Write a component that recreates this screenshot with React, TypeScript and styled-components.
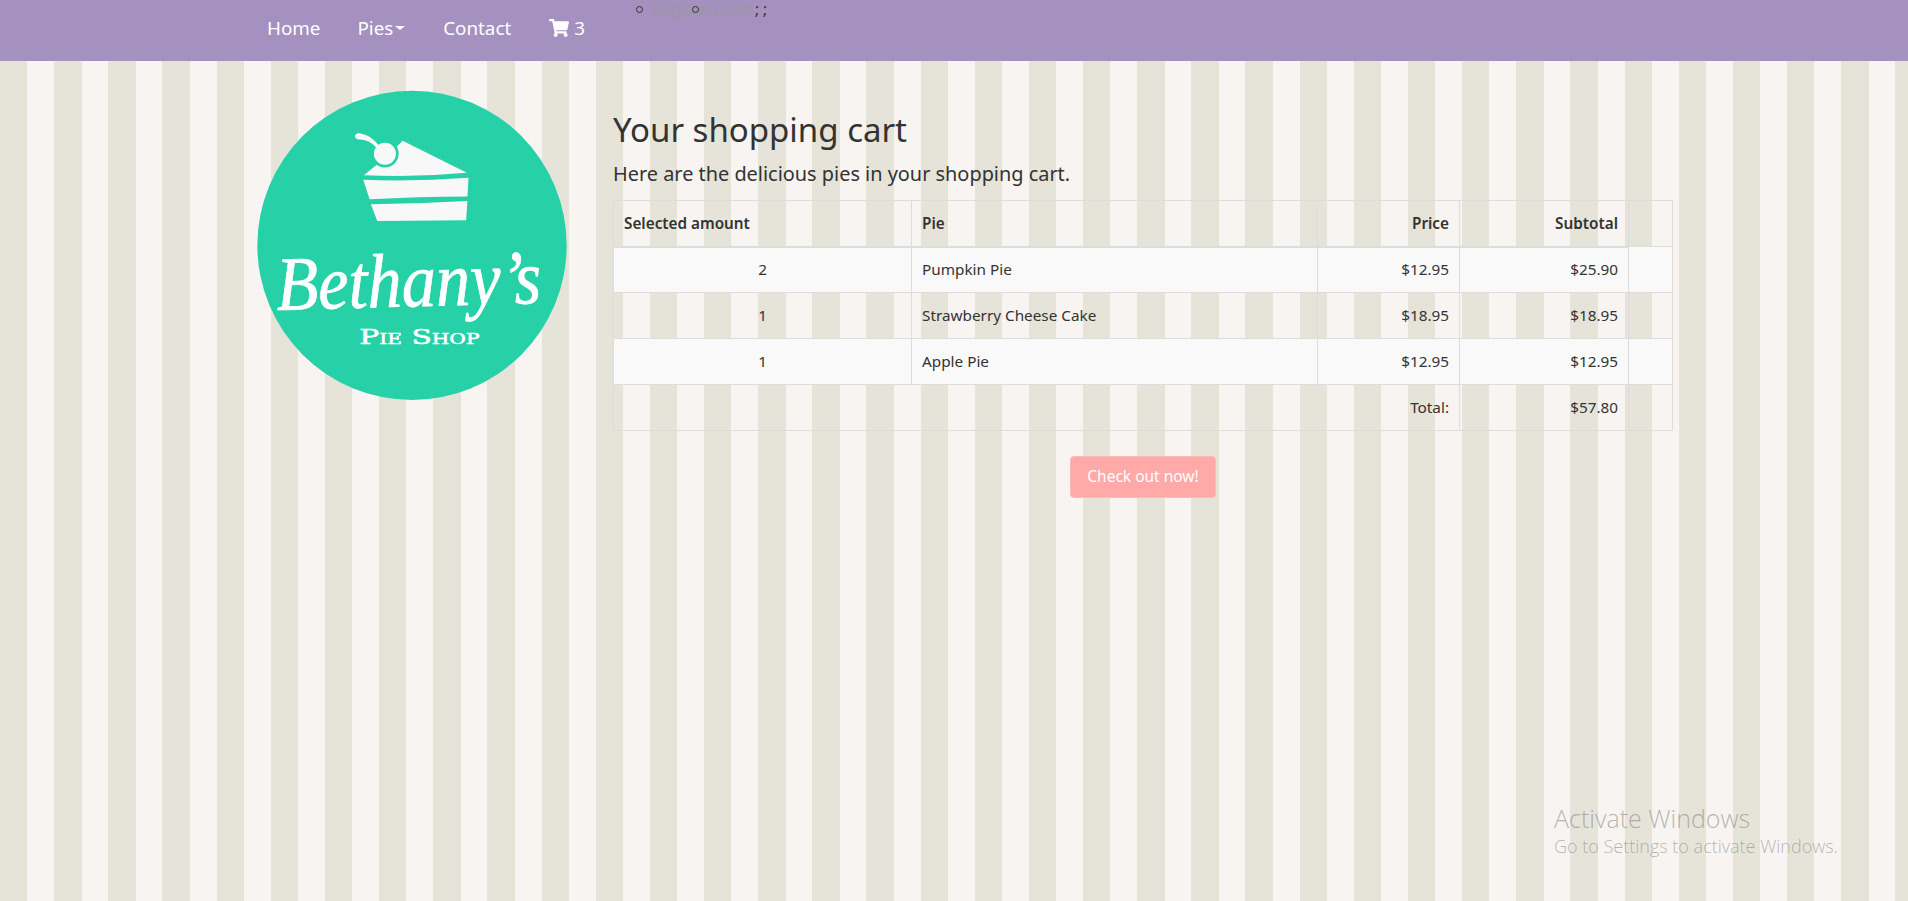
import React from "react";
import styled, { createGlobalStyle } from "styled-components";
import { FaShoppingCart } from "react-icons/fa";

const GlobalStyle = createGlobalStyle`
  html, body {
    margin: 0;
    padding: 0;
  }
  body {
    font-family: "Noto Sans", "Open Sans", sans-serif;
    color: #333;
    background-color: #f7f4f1;
    background-image: repeating-linear-gradient(
      90deg,
      #e6e4d9 0,
      #e6e4d9 27.4px,
      #f7f4f1 27.4px,
      #f7f4f1 54.15px
    );
  }
`;

const Page = styled.div`
  height: 901px;
  overflow: hidden;
`;

const Nav = styled.nav`
  height: 61px;
  background: #a591bf;
  display: flex;
  align-items: flex-start;
  padding-left: 267px;
  box-sizing: border-box;
`;

const NavLink = styled.a<{ $gap: number }>`
  display: flex;
  align-items: center;
  color: #fff;
  font-size: 18.8px;
  line-height: 28px;
  margin-top: 14px;
  margin-right: ${(p) => p.$gap}px;
  text-decoration: none;
  white-space: nowrap;
`;

const Caret = styled.span`
  display: inline-block;
  width: 0;
  height: 0;
  margin-left: 2px;
  border-top: 4px solid #fff;
  border-left: 5px solid transparent;
  border-right: 5px solid transparent;
`;

const CartIcon = styled(FaShoppingCart)`
  font-size: 20px;
  margin-right: 5px;
`;

const UserMenu = styled.ul`
  display: flex;
  list-style: none;
  margin: 0 0 0 51px;
  padding: 0;
  font-size: 15.4px;
  line-height: 19px;
  color: #9a97a3;
`;

const UserItem = styled.li<{ $marker: number; $pad?: number }>`
  position: relative;
  padding-left: ${(p) => p.$pad || 0}px;
  &::before {
    content: "";
    position: absolute;
    left: ${(p) => p.$marker}px;
    top: 6px;
    width: 5px;
    height: 5px;
    border: 1.5px solid #333;
    border-radius: 50%;
  }
`;

const Separators = styled.li`
  color: #333;
  margin-left: 2px;
`;

const Main = styled.main`
  display: flex;
  align-items: flex-start;
  padding: 30px 0 0 257px;
`;

const Logo = styled.svg`
  flex: none;
  width: 310px;
  height: 309px;
  overflow: visible;
`;

const Content = styled.section`
  margin-left: 46px;
  width: 1060px;
  padding-top: 19px;
`;

const Title = styled.h1`
  margin: 0;
  font-size: 33px;
  font-weight: 400;
  line-height: 40px;
`;

const Lead = styled.p`
  margin: 9px 0 0;
  font-size: 19.9px;
  line-height: 29px;
`;

const CartTable = styled.table`
  border-collapse: collapse;
  table-layout: fixed;
  width: 1059px;
  margin-top: 12px;
  border: 1px solid #ddd;
  font-size: 15.3px;
`;

const Head = styled.th<{ $right?: boolean }>`
  height: 46px;
  box-sizing: border-box;
  padding: 0 10px 1px;
  font-weight: 600;
  text-align: ${(p) => (p.$right ? "right" : "left")};
  border: 1px solid #ddd;
  border-bottom: 2px solid #ddd;
`;

const Row = styled.tr<{ $striped?: boolean }>`
  background: ${(p) => (p.$striped ? "#f9f9f9" : "transparent")};
`;

const Cell = styled.td<{ $align?: string }>`
  height: 46px;
  box-sizing: border-box;
  padding: 0 10px 2px;
  text-align: ${(p) => p.$align || "left"};
  border: 1px solid #ddd;
`;

const Checkout = styled.div`
  display: flex;
  justify-content: center;
  margin-top: 25px;
`;

const CheckoutButton = styled.a`
  box-sizing: border-box;
  width: 146px;
  height: 42px;
  padding-bottom: 2px;
  display: flex;
  align-items: center;
  justify-content: center;
  background: #ffa9a9;
  border: 1px solid #ffb8b8;
  border-radius: 4px;
  color: #fff;
  font-size: 15.5px;
`;

const Watermark = styled.div`
  position: absolute;
  left: 1554px;
  top: 802px;
  color: rgba(100, 100, 100, 0.45);
  font-family: "Open Sans", sans-serif;
  font-weight: 300;
`;

const WatermarkTitle = styled.div`
  font-size: 25px;
  line-height: 32px;
`;

const WatermarkText = styled.div`
  font-size: 18px;
  line-height: 24px;
`;

const rows = [
  { amount: 2, pie: "Pumpkin Pie", price: "$12.95", subtotal: "$25.90" },
  { amount: 1, pie: "Strawberry Cheese Cake", price: "$18.95", subtotal: "$18.95" },
  { amount: 1, pie: "Apple Pie", price: "$12.95", subtotal: "$12.95" },
];

const LogoArt = () => (
  <Logo viewBox="52 33 928 925">
    <circle cx="516" cy="495" r="463" fill="#26d1a8" />
    <g fill="#f8f8f8">
      <path d="M488 182 L680 278 Q530 292 372 285 L415 250 L470 200 Z" />
      <circle cx="435" cy="221" r="41" fill="#26d1a8" />
      <path d="M370 299 Q530 304 685 293 L682 349 Q530 350 389 357 Z" />
      <path d="M393 372 Q540 370 682 362 L678 420 L412 422 Z" />
      <circle cx="435" cy="221" r="33" />
      <path d="M345 168 Q348 158 362 160 Q395 165 417 197 L410 203 Q388 178 358 178 Q346 178 345 168 Z" />
    </g>
    <g fill="#fff" textAnchor="middle">
      <text
        fontFamily="'Liberation Serif', serif"
        fontStyle="italic"
        fontSize="205"
        stroke="#fff"
        strokeWidth="2"
        transform="translate(508 678) rotate(-1.5) scale(1 1.12)"
      >
        Bethany’s
      </text>
      <text
        x="538"
        y="790"
        fontFamily="'DejaVu Serif', serif"
        fontSize="62"
        stroke="#fff"
        strokeWidth="1.5"
        textLength="360"
        lengthAdjust="spacingAndGlyphs"
        style={{ fontVariant: "small-caps" }}
      >
        Pie Shop
      </text>
    </g>
  </Logo>
);

export default function App() {
  return (
    <Page>
      <GlobalStyle />
      <Nav>
        <NavLink $gap={37}>Home</NavLink>
        <NavLink $gap={38}>
          Pies
          <Caret />
        </NavLink>
        <NavLink $gap={38}>Contact</NavLink>
        <NavLink $gap={0}>
          <CartIcon />3
        </NavLink>
        <UserMenu>
          <UserItem $marker={0} $pad={17}>
            Register
          </UserItem>
          <UserItem $marker={-21}>Login</UserItem>
          <Separators>;&nbsp;;</Separators>
        </UserMenu>
      </Nav>
      <Main>
        <LogoArt />
        <Content>
          <Title>Your shopping cart</Title>
          <Lead>Here are the delicious pies in your shopping cart.</Lead>
          <CartTable>
            <colgroup>
              <col style={{ width: 298 }} />
              <col style={{ width: 406 }} />
              <col style={{ width: 142 }} />
              <col style={{ width: 169 }} />
              <col style={{ width: 44 }} />
            </colgroup>
            <thead>
              <tr>
                <Head>Selected amount</Head>
                <Head>Pie</Head>
                <Head $right>Price</Head>
                <Head $right>Subtotal</Head>
              </tr>
            </thead>
            <tbody>
              {rows.map((row, i) => (
                <Row key={i} $striped={i % 2 === 0}>
                  <Cell $align="center">{row.amount}</Cell>
                  <Cell>{row.pie}</Cell>
                  <Cell $align="right">{row.price}</Cell>
                  <Cell $align="right">{row.subtotal}</Cell>
                  <Cell />
                </Row>
              ))}
            </tbody>
            <tfoot>
              <tr>
                <Cell colSpan={3} $align="right">
                  Total:
                </Cell>
                <Cell $align="right">$57.80</Cell>
                <Cell />
              </tr>
            </tfoot>
          </CartTable>
          <Checkout>
            <CheckoutButton>Check out now!</CheckoutButton>
          </Checkout>
        </Content>
      </Main>
      <Watermark>
        <WatermarkTitle>Activate Windows</WatermarkTitle>
        <WatermarkText>Go to Settings to activate Windows.</WatermarkText>
      </Watermark>
    </Page>
  );
}
